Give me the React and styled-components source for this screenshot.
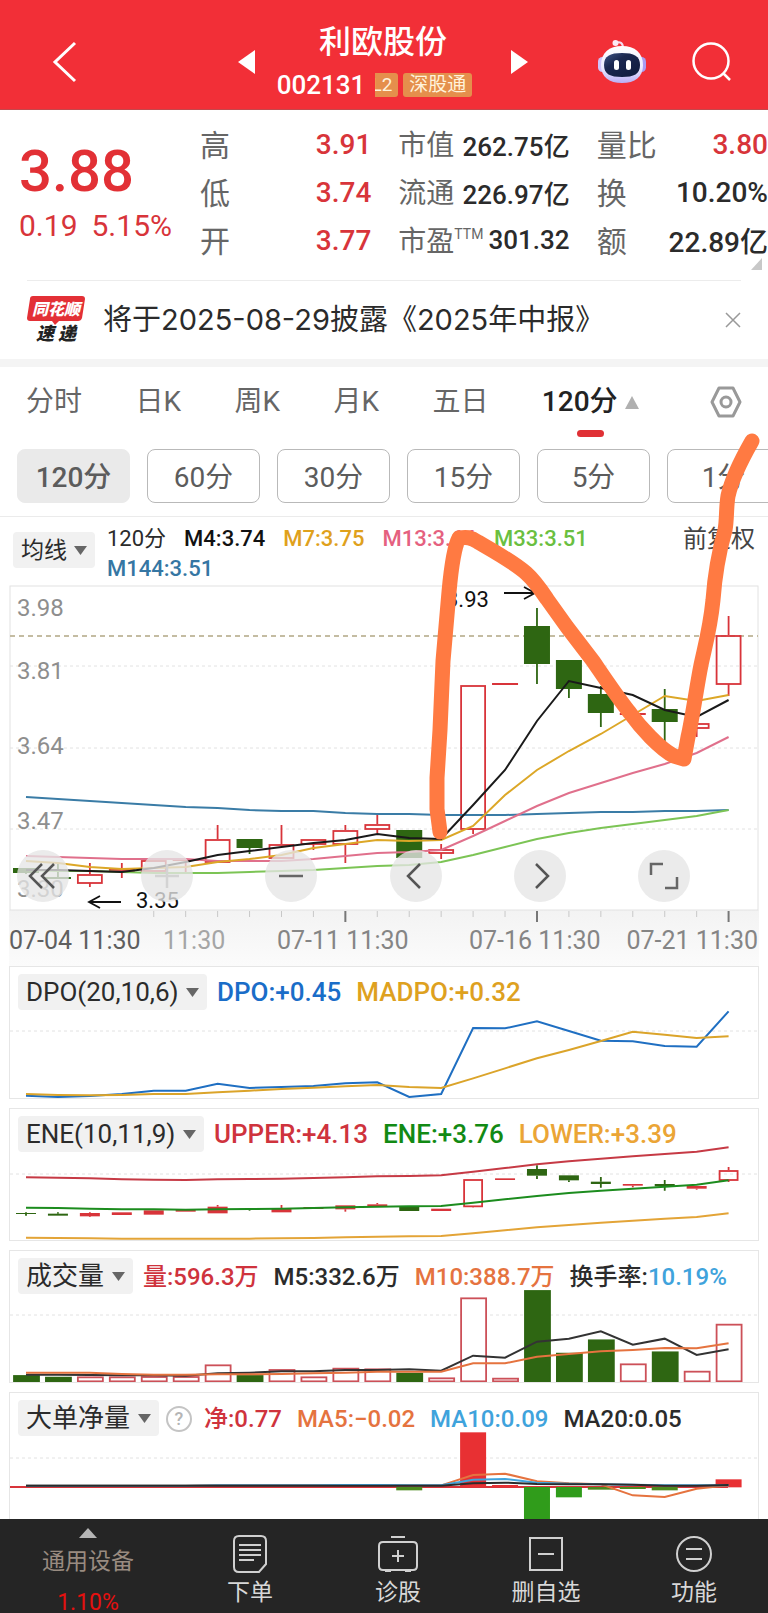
import React, {useState} from 'react';
import styled, {createGlobalStyle} from 'styled-components';

const GlobalStyle = createGlobalStyle`
    * {
        box-sizing: border-box;
    }
    body {
        margin: 0;
        background-color: #fff;
        color: #2b2b2b;
        font-family: Roboto, "Noto Sans CJK SC", sans-serif;
    }
    button, select {
        margin: 0;
        padding: 0;
        border: 0;
        background: none;
        color: inherit;
        font: inherit;
    }
    svg {
        display: block;
    }
`;

const RED = '#d8343a';
const GREEN = '#2e6612';
const STEP = 32;

const Page = styled.div`
    width: 100%;
    overflow: hidden;
`;

/* ---------- header ---------- */

const Header = styled.header`
    display: grid;
    grid-template-columns: 230px 1fr 230px;
    height: 110px;
    background-color: #f22f37;
    border-bottom: 1px solid #c4484c;
    color: #fff;
`;

const HeaderSide = styled.div`
    display: flex;
    align-items: center;
    justify-content: ${props => props.$end ? 'flex-end' : 'flex-start'};
    gap: 45px;
    padding: 14px 36px 0 52px;
`;

const HeaderMain = styled.div`
    display: flex;
    align-items: center;
    justify-content: space-between;
    padding: 15px 10px 0 8px;
`;

const Title = styled.div`
    display: flex;
    flex-direction: column;
    align-items: center;
    h1 {
        margin: 0;
        padding-bottom: 4px;
        font-size: 32px;
        line-height: 42px;
        font-weight: 500;
    }
`;

const Code = styled.div`
    display: flex;
    align-items: center;
    gap: 5px;
    margin-right: 17px;
    font-size: 26px;
    line-height: 36px;
    font-weight: 500;
    span {
        margin-right: 5px;
    }
`;

const Tag = styled.b`
    display: flex;
    justify-content: flex-end;
    width: ${props => props.$cut ? '23px' : 'auto'};
    padding: 0 6px;
    border-radius: ${props => props.$cut ? '0 3px 3px 0' : '3px'};
    overflow: hidden;
    background-color: #e58f4c;
    color: #fff3dc;
    font-size: 19px;
    line-height: 24px;
    font-weight: 400;
`;

/* ---------- quote ---------- */

const Quote = styled.section`
    display: grid;
    grid-template-columns: 154px 1fr 1fr 1fr;
    column-gap: 27px;
    position: relative;
    height: 170px;
    padding: 9px 0 0 19px;
`;

const Price = styled.div`
    padding-top: 17px;
    color: ${RED};
    white-space: nowrap;
    strong {
        display: block;
        font-size: 58px;
        line-height: 70px;
        font-weight: 500;
        color: #e23035;
    }
    span {
        margin-right: 14px;
        font-size: 30px;
        line-height: 40px;
    }
`;

const Figures = styled.dl`
    margin: 0;
    div {
        display: flex;
        justify-content: space-between;
        align-items: center;
        height: 48px;
        white-space: nowrap;
    }
    dt {
        display: flex;
        color: #666;
        font-size: ${props => props.$tight ? 28 : 30}px;
    }
    dd {
        margin: 0;
        padding-top: 2px;
        font-size: ${props => props.$tight ? 26 : 28}px;
        font-weight: 500;
    }
    sup {
        font-size: 14px;
        line-height: 30px;
    }
`;

const Value = styled.dd`
    color: ${props => props.$up ? RED : '#2b2b2b'};
`;

const Corner = styled.i`
    position: absolute;
    right: 6px;
    bottom: 10px;
    border-left: 11px solid transparent;
    border-bottom: 12px solid #c8c8c8;
`;

const Notice = styled.section`
    display: flex;
    align-items: center;
    gap: 18px;
    height: 79px;
    margin: 0 27px;
    border-top: 1px solid #ececec;
    a {
        flex: 1;
        color: #2b2b2b;
        font-family: Inter, "Noto Sans CJK SC", sans-serif;
        font-size: 29px;
        line-height: 40px;
        text-decoration: none;
        white-space: nowrap;
    }
`;

const Band = styled.div`
    height: 8px;
    background-color: #f4f4f4;
`;

/* ---------- periods ---------- */

const ChartArea = styled.section`
    position: relative;
`;

const Tabs = styled.div`
    display: flex;
    justify-content: space-between;
    align-items: flex-start;
    height: 82px;
    padding: 14px 26px 0 26px;
`;

const Tab = styled.button`
    display: flex;
    flex-direction: column;
    align-items: center;
    color: ${props => props.$active ? '#222' : '#666'};
    font-size: 28px;
    line-height: 42px;
    font-weight: ${props => props.$active ? 500 : 400};
    &::after {
        content: '';
        width: 27px;
        height: 7px;
        margin-top: 7px;
        border-radius: 4px;
        background-color: ${props => props.$active ? '#e03035' : 'transparent'};
    }
`;

const TabLabel = styled.span`
    display: flex;
    align-items: center;
    gap: 7px;
`;

const Settings = styled.button`
    margin-left: 18px;
`;

const Triangle = styled.i`
    width: 0;
    border-left: ${props => props.$size}px solid transparent;
    border-right: ${props => props.$size}px solid transparent;
    border-bottom: ${props => props.$tall}px solid ${props => props.$color};
`;

const Periods = styled.div`
    display: flex;
    gap: 17px;
    padding: 0 0 13px 17px;
    border-bottom: 1px solid #ebebeb;
    overflow: hidden;
`;

const Period = styled.button`
    flex: 0 0 113px;
    height: 54px;
    padding-bottom: 3px;
    border: 1px solid ${props => props.$active ? '#eaeaea' : '#b9b9b9'};
    border-radius: 8px;
    background-color: ${props => props.$active ? '#eaeaea' : '#fff'};
    color: #5c5c5c;
    font-size: 28px;
    font-weight: ${props => props.$active ? 500 : 400};
`;

/* ---------- charts ---------- */

const SelectBox = styled.label`
    display: inline-flex;
    align-items: center;
    flex: none;
    height: 36px;
    padding: 0 8px;
    border-radius: 4px;
    background-color: #f1f1f1;
    color: #2b2b2b;
    select {
        appearance: none;
        font-size: ${props => props.$small ? 23 : 26}px;
    }
    svg {
        margin-left: 7px;
    }
`;

const AverageRow = styled.div`
    display: flex;
    gap: 12px;
    height: 68px;
    padding: 7px 13px 0 13px;
    ${SelectBox} {
        margin-top: 8px;
    }
`;

const Averages = styled.div`
    display: flex;
    flex-wrap: wrap;
    align-content: flex-start;
    flex: 1;
    column-gap: 18px;
    font-size: 22px;
    line-height: 30px;
    font-weight: 500;
    span:first-child {
        font-weight: 400;
    }
`;

const Adjust = styled.button`
    align-self: flex-start;
    color: #444;
    font-size: 24px;
    line-height: 30px;
`;

const Colored = styled.span`
    color: ${props => props.$color};
    white-space: nowrap;
`;

const MainChart = styled.div`
    position: relative;
    margin: 0 9px;
    svg text {
        font-family: Roboto, sans-serif;
    }
`;

const Tools = styled.div`
    position: absolute;
    left: 8px;
    right: 69px;
    bottom: 64px;
    display: flex;
    justify-content: space-between;
`;

const Tool = styled.button`
    display: grid;
    place-items: center;
    width: 52px;
    height: 52px;
    border-radius: 50%;
    background-color: rgba(230, 230, 230, 0.78);
`;

const Stroke = styled.svg`
    position: absolute;
    top: 0;
    left: 0;
    width: 100%;
    height: 100%;
    pointer-events: none;
`;

const Panel = styled.section`
    display: grid;
    grid-template-columns: minmax(0, 1fr);
    margin: 0 9px ${props => props.$last ? 0 : 9}px;
    border: 1px solid #e6e6e6;
    border-bottom-width: ${props => props.$last ? 0 : 1}px;
    > svg {
        grid-area: 1 / 1;
        width: 100%;
    }
`;

const PanelHead = styled.div`
    grid-area: 1 / 1;
    z-index: 1;
    align-self: start;
    display: flex;
    align-items: baseline;
    gap: 15px;
    padding: 7px 8px;
    font-size: ${props => props.$small ? 24 : 26}px;
    line-height: 36px;
    font-weight: 500;
    ${SelectBox} {
        margin-right: -5px;
        font-weight: 400;
    }
`;

const Help = styled.button`
    width: 26px;
    height: 26px;
    margin: 0 -3px;
    align-self: center;
    border: 2px solid #c4c4c4;
    border-radius: 50%;
    color: #b5b5b5;
    font-size: 18px;
    line-height: 20px;
`;

/* ---------- bottom bar ---------- */

const BottomBar = styled.nav`
    display: grid;
    grid-template-columns: 176fr 148fr 148fr 148fr 148fr;
    height: 94px;
    margin-bottom: 1px;
    overflow: hidden;
    background-color: #252525;
    color: #d8d8d8;
`;

const NavItem = styled.button`
    display: flex;
    flex-direction: column;
    align-items: center;
    padding-top: 14px;
    font-size: 23px;
    line-height: 30px;
    svg {
        margin-bottom: 3px;
    }
`;

const Sector = styled(NavItem)`
    padding-top: 9px;
    color: #998b80;
    span {
        margin-top: 9px;
    }
    em {
        margin-top: 11px;
        color: #e6100f;
        font-size: 23px;
        font-style: normal;
    }
`;

/* ---------- data ---------- */

const figures = [
    [['高', '3.91', true], ['低', '3.74', true], ['开', '3.77', true]],
    [['市值', '262.75亿'], ['流通', '226.97亿'], ['市盈', '301.32', false, 'TTM']],
    [['量比', '3.80', true], ['换', '10.20%'], ['额', '22.89亿']]
];

const tabs = ['分时', '日K', '周K', '月K', '五日', '120分'];
const periods = ['120分', '60分', '30分', '15分', '5分', '1分'];

// [high, top, bottom, low, color, hollow]
const candles = [
    [868, 868, 873, 874, 'g'], [864, 877, 879, 879, 'g'], [863, 874, 883, 887, 'r', 1],
    [863, 868, 871, 878, 'r', 1], [859, 860, 871, 871, 'r', 1], [859, 859, 861, 872, 'r'],
    [825, 839, 862, 862, 'r', 1], [839, 839, 848, 854, 'g'], [825, 844, 858, 858, 'r', 1],
    [839, 839, 844, 850, 'r', 1], [825, 830, 844, 863, 'r', 1], [814, 824, 829, 833, 'r', 1],
    [830, 830, 858, 858, 'g'], [844, 849, 853, 859, 'r', 1], [685, 685, 829, 834, 'r', 1],
    [683, 683, 685, 685, 'r'], [608, 626, 664, 684, 'g'], [660, 660, 689, 698, 'g'],
    [686, 694, 713, 727, 'g'], [713, 713, 715, 715, 'r'], [689, 709, 722, 742, 'g'],
    [723, 723, 728, 737, 'r', 1], [616, 635, 684, 696, 'r', 1]
];

const mainLines = [
    ['#3a7ca6', [797, 799, 801, 803, 805, 807, 808, 810, 811, 811, 813, 814, 814, 815, 815, 815, 814, 813, 812, 812, 811, 811, 810]],
    ['#7cc455', [870, 871, 871, 872, 873, 873, 873, 872, 871, 870, 868, 866, 865, 862, 855, 847, 839, 833, 828, 824, 820, 816, 810]],
    ['#e0708c', [856, 857, 858, 859, 859, 859, 861, 861, 861, 859, 856, 853, 852, 850, 836, 821, 806, 793, 783, 773, 764, 753, 737]],
    ['#dca727', [861, 863, 867, 869, 868, 867, 862, 859, 855, 848, 844, 840, 841, 840, 826, 795, 770, 751, 734, 715, 696, 701, 695]],
    ['#1a1a1a', [870, 870, 871, 872, 868, 862, 855, 851, 847, 843, 840, 834, 838, 839, 805, 770, 721, 681, 688, 695, 710, 717, 700]]
];

// the indicator panels below keep three steps per pixel
const dpoLines = [
    ['#1f6fc2', [410, 414, 411, 405, 395, 395, 374, 387, 384, 381, 373, 370, 414, 405, 207, 208, 187, 216, 245, 247, 261, 263, 157]],
    ['#dba42a', [405, 408, 409, 408, 405, 405, 400, 395, 390, 386, 382, 378, 384, 387, 358, 328, 298, 273, 246, 218, 227, 237, 232]]
];

const eneLines = [
    ['#c63a45', [652, 653, 655, 658, 659, 660, 658, 657, 656, 654, 652, 649, 648, 646, 635, 624, 613, 604, 596, 589, 582, 575, 562]],
    ['#1c8c1e', [743, 744, 746, 748, 748, 749, 748, 747, 746, 744, 742, 740, 739, 738, 728, 718, 708, 699, 692, 686, 680, 674, 661]],
    ['#e3a437', [833, 834, 835, 836, 836, 836, 836, 836, 835, 834, 832, 830, 829, 828, 820, 811, 802, 795, 788, 782, 776, 771, 760]]
];

const eneCandles = [
    [757, 759, 762, 767, 'g'], [757, 761, 767, 767, 'g'], [757, 759, 769, 771, 'r'],
    [757, 757, 765, 765, 'r'], [751, 751, 764, 764, 'r'], [750, 750, 755, 755, 'r'],
    [735, 740, 760, 760, 'r'], [746, 746, 749, 752, 'g'], [735, 746, 757, 757, 'r'],
    [741, 741, 747, 747, 'r'], [736, 736, 748, 755, 'r'], [729, 733, 738, 740, 'r'],
    [738, 738, 753, 753, 'g'], [746, 746, 753, 753, 'r'], [657, 657, 739, 742, 'r', 1],
    [655, 655, 660, 660, 'r'], [616, 627, 647, 657, 'g'], [646, 646, 661, 666, 'g'],
    [651, 665, 672, 683, 'g'], [672, 672, 677, 682, 'r'], [660, 672, 679, 692, 'g'],
    [678, 678, 686, 689, 'r'], [621, 630, 660, 666, 'r', 1]
];

const volumes = [405, 410, 409, 409, 408, 408, 373, 405, 387, 409, 383, 385, 398, 412, 172, 413, 150, 338, 298, 370, 334, 392, 251];
const fallingBars = [0, 1, 7, 12, 16, 17, 18, 20];

const volumeLines = [
    ['#333', [404, 404, 405, 406, 406, 407, 400, 398, 394, 394, 390, 390, 388, 392, 347, 353, 305, 296, 274, 314, 296, 345, 328]],
    ['#e5733f', [398, 398, 398, 402, 404, 404, 403, 403, 402, 400, 398, 395, 395, 395, 370, 370, 350, 342, 334, 330, 324, 325, 310]]
];

const netBars = [
    [12, 738, 748, '#4c8a1e'], [14, 574, 738, '#e83033'], [15, 732, 738, '#e83033'],
    [16, 738, 850, '#309c1b'], [17, 738, 769, '#309c1b'], [18, 738, 746, '#4c8a1e'],
    [19, 738, 744, '#4c8a1e'], [20, 738, 748, '#4c8a1e'], [22, 715, 739, '#e83033']
];

const netLines = [
    ['#e5733f', [734, 734, 734, 734, 734, 734, 732, 732, 732, 732, 732, 732, 733, 733, 702, 698, 721, 727, 730, 763, 768, 743, 733]],
    ['#3fa3dc', [734, 734, 734, 734, 734, 734, 733, 733, 733, 733, 732, 732, 733, 733, 716, 714, 725, 728, 730, 731, 733, 733, 733]],
    ['#2b2b2b', [734, 734, 734, 734, 734, 734, 734, 734, 734, 734, 734, 734, 734, 734, 727, 725, 729, 730, 730, 731, 734, 734, 732]]
];

/* ---------- drawing ---------- */

const xAt = i => 16 + i * STEP * 0.998;

const Lines = ({lines, scale = 1}) => lines.map(([color, values]) => (
    <polyline
        key={color}
        points={values.map((v, i) => `${xAt(i)},${v / scale}`).join(' ')}
        fill="none"
        stroke={color}
        strokeWidth="2"
    />
));

const Candles = ({data, scale = 1, width = 26}) => data.map(([high, top, bottom, low, tone, hollow], i) => {
    const color = tone === 'g' ? GREEN : RED;
    const x = xAt(i);
    return (
        <g key={i} stroke={color} strokeWidth="1.8">
            <path d={`M${x} ${high / scale}V${top / scale}M${x} ${bottom / scale}V${low / scale}`} />
            {hollow
                ? <rect x={x - width / 2 + 1} y={top / scale + 1} width={width - 2} height={Math.max((bottom - top) / scale - 1, 2)} fill="none" />
                : <rect x={x - width / 2} y={top / scale} width={width} height={(bottom - top) / scale} fill={color} stroke="none" />}
        </g>
    );
});

const GridLine = ({y, color = '#e2e2e2', dash = '3 3', width = 1}) => (
    <path d={`M0 ${y}H748`} stroke={color} strokeDasharray={dash} strokeWidth={width} />
);

const PickIndicator = ({label, small}) => (
    <SelectBox $small={small}>
        <select aria-label="指标">
            <option>{label}</option>
        </select>
        <svg width="13" height="9" viewBox="0 0 13 9"><path d="M0 0H13L6.5 9Z" fill="#666" /></svg>
    </SelectBox>
);

const Robot = () => (
    <svg width="50" height="46" viewBox="0 0 50 46">
        <defs>
            <linearGradient id="shell" x1="0" y1="0" x2="0" y2="1">
                <stop offset="0" stopColor="#fff" />
                <stop offset="0.6" stopColor="#eceaff" />
                <stop offset="1" stopColor="#b9aef5" />
            </linearGradient>
            <linearGradient id="visor" x1="0" y1="0" x2="1" y2="1">
                <stop offset="0" stopColor="#3f5488" />
                <stop offset="0.35" stopColor="#1b2750" />
                <stop offset="1" stopColor="#0f1a3c" />
            </linearGradient>
        </defs>
        <path d="M19 4C23 2 26 4 26 9" fill="none" stroke="#f3dcf0" strokeWidth="2" />
        <circle cx="18.5" cy="4" r="3" fill="#fbe9f4" />
        <rect x="1" y="18" width="9" height="15" rx="4.5" fill="#cfc4fb" />
        <rect x="40" y="18" width="9" height="15" rx="4.5" fill="#a99cf2" />
        <path d="M25 7C38 7 46 14 46 26C46 38 38 44 25 44C12 44 4 38 4 26C4 14 12 7 25 7Z" fill="url(#shell)" />
        <path d="M25 14C37 14 43 17 43 26C43 35 37 38 25 38C13 38 7 35 7 26C7 17 13 14 25 14Z" fill="url(#visor)" />
        <rect x="17" y="21" width="5" height="10" rx="2.5" fill="#fff" />
        <rect x="29" y="21" width="5" height="10" rx="2.5" fill="#fff" />
    </svg>
);

const Logo = () => (
    <svg width="58" height="54" viewBox="0 -3 58 54">
        <path d="M6 0H55Q58 0 58 3L55 22Q54 25 51 25H32L28 29L25 25H3Q0 25 0 22L3 3Q3 0 6 0Z" fill="#e33036" />
        <g fontFamily="'Noto Sans CJK SC', sans-serif" fontWeight="900" fontStyle="italic" textAnchor="middle">
            <text x="29" y="19" fontSize="16" fill="#fff">同花顺</text>
            <text x="18" y="44" fontSize="18" fill="#222">速</text>
            <text x="40" y="44" fontSize="18" fill="#222">递</text>
        </g>
    </svg>
);

const toolIcons = [
    ['最左', <path d="M25 14L13 26L25 38M37 14L25 26L37 38" stroke="#555" />],
    ['放大', <path d="M26 14V38M14 26H38" stroke="#d3d3d3" />],
    ['缩小', <path d="M14 26H38" stroke="#666" />],
    ['左移', <path d="M30 14L18 26L30 38" stroke="#555" />],
    ['右移', <path d="M22 14L34 26L22 38" stroke="#555" />],
    ['全屏', <path d="M13 25V14H25M39 27V38H27" stroke="#666" />]
];

const navItems = [
    ['下单', <path d="M9 3H31Q36 3 36 8V31L29 39H9Q4 39 4 34V8Q4 3 9 3ZM9 12H31M9 17H31M9 22H31M9 27H24" />],
    ['诊股', <path d="M13 4H27M5 9H35Q39 9 39 13V33Q39 37 35 37H5Q1 37 1 33V13Q1 9 5 9ZM20 17V29M14 23H26M7 38H13M27 38H33" />],
    ['删自选', <path d="M4 5H36V37H4ZM12 21H28" />],
    ['功能', <path d="M20 4A17 17 0 1 1 20 38A17 17 0 1 1 20 4ZM12 16H28M12 26H28" />]
];

const MainCandleChart = () => (
    <MainChart>
        <svg viewBox="-1 585 750 381" width="100%">
            <defs>
                <linearGradient id="axis" x1="0" y1="0" x2="0" y2="1">
                    <stop offset="0" stopColor="#f3f3f3" />
                    <stop offset="1" stopColor="#fbfbfb" />
                </linearGradient>
            </defs>
            <rect x="-1" y="910" width="750" height="56" fill="url(#axis)" />
            <rect x="0" y="586" width="748" height="324" fill="#fff" stroke="#e2e2e2" />
            <GridLine y={666} />
            <GridLine y={748} />
            <GridLine y={829} />
            <GridLine y={636} color="#c4bca2" dash="5 4" width={2} />
            <g fontSize="24" fill="#8e8e8e">
                <text x="7" y="616">3.98</text>
                <text x="7" y="679">3.81</text>
                <text x="7" y="754">3.64</text>
                <text x="7" y="829">3.47</text>
                <text x="7" y="897">3.30</text>
            </g>
            <Candles data={candles} />
            <Lines lines={mainLines} />
            <g fontSize="22" fill="#111">
                <text x="436" y="607">3.93</text>
                <text x="126" y="908">3.35</text>
            </g>
            <path d="M494 593H525M514 587L525 593L514 599M111 902H79M90 896L79 902L90 908" fill="none" stroke="#111" strokeWidth="1.8" />
            {candles.map((c, i) => i > 3 && (
                <path
                    key={i}
                    d={i % 6 === 4 && i > 4 ? `M${xAt(i)} 911V922` : `M${xAt(i)} 911V917`}
                    stroke={i % 6 === 4 && i > 4 ? '#777' : '#c8c8c8'}
                    strokeWidth={i % 6 === 4 && i > 4 ? 2 : 1}
                />
            ))}
            <g fontSize="25" fill="#858585">
                <text x="-1" y="949" fill="#5f5f5f">07-04 11:30</text>
                <text x="153" y="949" fill="#a5a5a5">11:30</text>
                <text x="267" y="949">07-11 11:30</text>
                <text x="459" y="949">07-16 11:30</text>
                <text x="748" y="949" textAnchor="end">07-21 11:30</text>
            </g>
        </svg>
        <Tools>
            {toolIcons.map(([label, icon]) => (
                <Tool key={label} aria-label={label}>
                    <svg width="52" height="52" fill="none" strokeWidth="2.5">{icon}</svg>
                </Tool>
            ))}
        </Tools>
    </MainChart>
);

const App = () => {
    const [tab, setTab] = useState('120分');
    const [period, setPeriod] = useState('120分');

    return (
        <Page>
            <GlobalStyle />
            <Header>
                <HeaderSide>
                    <button aria-label="返回">
                        <svg width="26" height="42" fill="none" stroke="#fff" strokeWidth="3"><path d="M23 2L3 21L23 40" /></svg>
                    </button>
                </HeaderSide>
                <HeaderMain>
                    <button aria-label="上一只">
                        <svg width="17" height="24"><path d="M17 0V24L0 12Z" fill="#fff" /></svg>
                    </button>
                    <Title>
                        <h1>利欧股份</h1>
                        <Code>
                            <span>002131</span>
                            <Tag $cut>L2</Tag>
                            <Tag>深股通</Tag>
                        </Code>
                    </Title>
                    <button aria-label="下一只">
                        <svg width="17" height="24"><path d="M0 0V24L17 12Z" fill="#fff" /></svg>
                    </button>
                </HeaderMain>
                <HeaderSide $end>
                    <button aria-label="助手"><Robot /></button>
                    <button aria-label="搜索">
                        <svg width="40" height="40" fill="none" stroke="#fff" strokeWidth="2.5">
                            <circle cx="19" cy="19" r="17.5" />
                            <path d="M31 31L38 38" />
                        </svg>
                    </button>
                </HeaderSide>
            </Header>

            <Quote>
                <Price>
                    <strong>3.88</strong>
                    <span>0.19</span>
                    <span>5.15%</span>
                </Price>
                {figures.map((rows, i) => (
                    <Figures key={i} $tight={i === 1}>
                        {rows.map(([label, value, up, note]) => (
                            <div key={label}>
                                <dt>{label}{note && <sup>{note}</sup>}</dt>
                                <Value $up={up}>{value}</Value>
                            </div>
                        ))}
                    </Figures>
                ))}
                <Corner />
            </Quote>

            <Notice>
                <Logo />
                <a href="#report">将于2025-08-29披露《2025年中报》</a>
                <button aria-label="关闭">
                    <svg width="16" height="16" stroke="#999" strokeWidth="1.5"><path d="M1 1L15 15M15 1L1 15" /></svg>
                </button>
            </Notice>
            <Band />

            <ChartArea>
                <Tabs role="tablist">
                    {tabs.map(name => (
                        <Tab key={name} role="tab" $active={name === tab} aria-selected={name === tab} onClick={() => setTab(name)}>
                            <TabLabel>
                                {name}
                                {name === '120分' && <Triangle $size={7} $tall={13} $color="#b0b0b0" />}
                            </TabLabel>
                        </Tab>
                    ))}
                    <Settings aria-label="设置">
                        <svg width="32" height="42" viewBox="0 0 32 42" fill="none" stroke="#999" strokeWidth="3">
                            <path d="M9 7H23L30 21L23 35H9L2 21Z" strokeLinejoin="round" />
                            <circle cx="16" cy="21" r="5" />
                        </svg>
                    </Settings>
                </Tabs>
                <Periods>
                    {periods.map(name => (
                        <Period key={name} $active={name === period} onClick={() => setPeriod(name)}>{name}</Period>
                    ))}
                </Periods>

                <AverageRow>
                    <PickIndicator label="均线" small />
                    <Averages>
                        <Colored $color="#2b2b2b">120分</Colored>
                        <Colored $color="#111">M4:3.74</Colored>
                        <Colored $color="#dfa11c">M7:3.75</Colored>
                        <Colored $color="#e5617f">M13:3.64</Colored>
                        <Colored $color="#6abf40">M33:3.51</Colored>
                        <Colored $color="#3576a3">M144:3.51</Colored>
                    </Averages>
                    <Adjust>前复权</Adjust>
                </AverageRow>
                <MainCandleChart />
                <Stroke viewBox="0 367 768 599">
                    <path
                        d="M752 441C744 455 732 478 728 496C726 508 727 520 725 530C720 548 715 572 713 600C710 630 704 650 701 665C697 685 692 720 688 737L684 759L674 756C660 749 640 727 630 713C618 698 606 680 593 661L567 627L547 599C539 587 534 580 526 573C512 561 490 549 478 542C471 537 466 537 459 538C454 547 451 570 449 592L443 661L440 730L437 778L437 809L440 832"
                        fill="none"
                        stroke="#ff7a42"
                        strokeWidth="15"
                        strokeLinecap="round"
                        strokeLinejoin="round"
                    />
                </Stroke>
            </ChartArea>

            <Panel>
                <PanelHead>
                    <PickIndicator label="DPO(20,10,6)" />
                    <Colored $color="#1a6dc8">DPO:+0.45</Colored>
                    <Colored $color="#dea11f">MADPO:+0.32</Colored>
                </PanelHead>
                <svg viewBox="0 8 748 131">
                    <GridLine y={72} />
                    <Lines lines={dpoLines} scale={3} />
                </svg>
            </Panel>

            <Panel>
                <PanelHead>
                    <PickIndicator label="ENE(10,11,9)" />
                    <Colored $color="#cf333d">UPPER:+4.13</Colored>
                    <Colored $color="#128a14">ENE:+3.76</Colored>
                    <Colored $color="#eba536">LOWER:+3.39</Colored>
                </PanelHead>
                <svg viewBox="0 149 748 131">
                    <GridLine y={214} />
                    <Candles data={eneCandles} scale={3} width={20} />
                    <Lines lines={eneLines} scale={3} />
                </svg>
            </Panel>

            <Panel>
                <PanelHead $small>
                    <PickIndicator label="成交量" />
                    <Colored $color="#cf333d">量:596.3万</Colored>
                    <Colored $color="#2b2b2b">M5:332.6万</Colored>
                    <Colored $color="#e5733f">M10:388.7万</Colored>
                    <Colored $color="#2b2b2b">换手率:<Colored $color="#3fa3dc">10.19%</Colored></Colored>
                </PanelHead>
                <svg viewBox="0 11 748 131">
                    <GridLine y={75} />
                    {volumes.map((v, i) => {
                        const falling = fallingBars.includes(i);
                        return (
                            <rect
                                key={i}
                                x={xAt(i) - 12}
                                y={v / 3 + 1}
                                width="25"
                                height={(427 - v) / 3 - 2}
                                fill={falling ? GREEN : '#fff'}
                                stroke={falling ? GREEN : '#cc5058'}
                                strokeWidth="1.8"
                            />
                        );
                    })}
                    <Lines lines={volumeLines} scale={3} />
                </svg>
            </Panel>

            <Panel $last>
                <PanelHead $small>
                    <PickIndicator label="大单净量" />
                    <Help aria-label="说明">?</Help>
                    <Colored $color="#cf333d">净:0.77</Colored>
                    <Colored $color="#e5733f">MA5:−0.02</Colored>
                    <Colored $color="#3fa3dc">MA10:0.09</Colored>
                    <Colored $color="#2b2b2b">MA20:0.05</Colored>
                </PanelHead>
                <svg viewBox="0 152 748 126">
                    <GridLine y={217} />
                    <path d="M0 246H718" stroke="#d8343a" strokeWidth="2" />
                    {netBars.map(([i, top, bottom, color]) => (
                        <rect key={i} x={xAt(i) - 13} y={top / 3} width="26" height={(bottom - top) / 3} fill={color} />
                    ))}
                    <Lines lines={netLines} scale={3} />
                </svg>
            </Panel>

            <BottomBar>
                <Sector>
                    <Triangle $size={9} $tall={10} $color="#b5b5b5" />
                    <span>通用设备</span>
                    <em>1.10%</em>
                </Sector>
                {navItems.map(([label, icon]) => (
                    <NavItem key={label}>
                        <svg width="40" height="42" fill="none" stroke="#d0d0d0" strokeWidth="2">{icon}</svg>
                        {label}
                    </NavItem>
                ))}
            </BottomBar>
        </Page>
    );
};

export default App;
